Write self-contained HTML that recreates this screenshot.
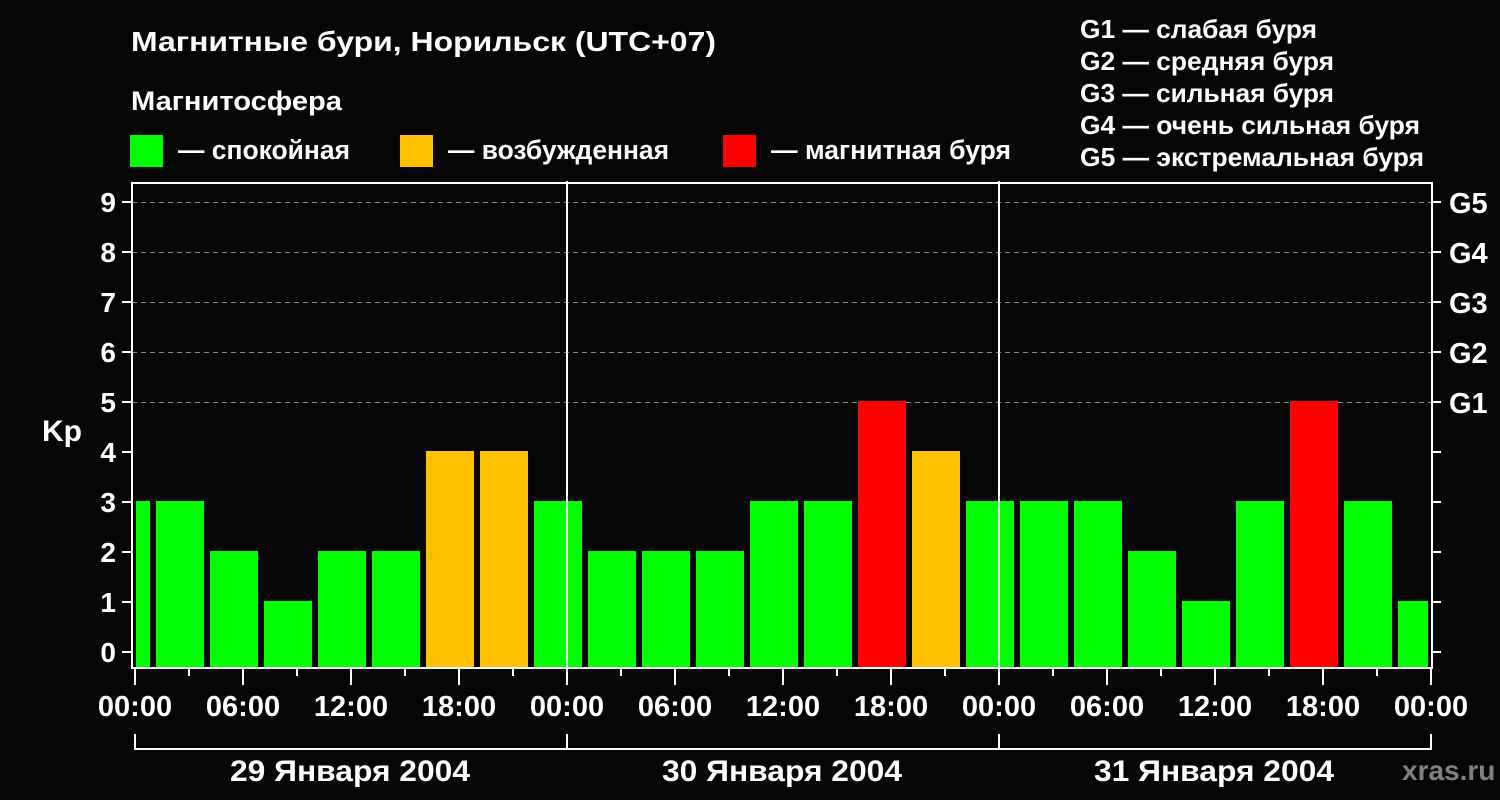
<!DOCTYPE html>
<html><head><meta charset="utf-8"><style>
html,body{margin:0;padding:0;background:#060606;width:1500px;height:800px;overflow:hidden}
svg{display:block}
text{font-family:"Liberation Sans",Arial,sans-serif;font-weight:bold;fill:#fff}
</style></head><body>
<svg width="1500" height="800" viewBox="0 0 1500 800" xmlns="http://www.w3.org/2000/svg">
<rect width="1500" height="800" fill="#060606"/>
<text x="131" y="51" font-size="28" textLength="585" lengthAdjust="spacingAndGlyphs">Магнитные бури, Норильск (UTC+07)</text>
<text x="131" y="110" font-size="27" textLength="211" lengthAdjust="spacingAndGlyphs">Магнитосфера</text>
<rect x="130" y="135" width="33" height="32" fill="#00ff00"/>
<text x="178" y="159" font-size="27" textLength="172" lengthAdjust="spacingAndGlyphs">— спокойная</text>
<rect x="400" y="135" width="33" height="32" fill="#ffc000"/>
<text x="448" y="159" font-size="27" textLength="221" lengthAdjust="spacingAndGlyphs">— возбужденная</text>
<rect x="723" y="135" width="33" height="32" fill="#ff0000"/>
<text x="771" y="159" font-size="27" textLength="240" lengthAdjust="spacingAndGlyphs">— магнитная буря</text>
<g font-size="26">
<text x="1080" y="38" textLength="237" lengthAdjust="spacingAndGlyphs">G1 — слабая буря</text>
<text x="1080" y="70" textLength="254" lengthAdjust="spacingAndGlyphs">G2 — средняя буря</text>
<text x="1080" y="102" textLength="254" lengthAdjust="spacingAndGlyphs">G3 — сильная буря</text>
<text x="1080" y="134" textLength="340" lengthAdjust="spacingAndGlyphs">G4 — очень сильная буря</text>
<text x="1080" y="166" textLength="344" lengthAdjust="spacingAndGlyphs">G5 — экстремальная буря</text>
</g>
<g stroke="#8a8a8a" stroke-width="1" stroke-dasharray="5,4">
<line x1="132" y1="202.5" x2="1432" y2="202.5"/>
<line x1="132" y1="252.5" x2="1432" y2="252.5"/>
<line x1="132" y1="302.5" x2="1432" y2="302.5"/>
<line x1="132" y1="352.5" x2="1432" y2="352.5"/>
<line x1="132" y1="402.5" x2="1432" y2="402.5"/>
</g>
<g>
<rect x="136" y="501" width="14" height="167" fill="#00ff00"/>
<rect x="156" y="501" width="48" height="167" fill="#00ff00"/>
<rect x="210" y="551" width="48" height="117" fill="#00ff00"/>
<rect x="264" y="601" width="48" height="67" fill="#00ff00"/>
<rect x="318" y="551" width="48" height="117" fill="#00ff00"/>
<rect x="372" y="551" width="48" height="117" fill="#00ff00"/>
<rect x="426" y="451" width="48" height="217" fill="#ffc000"/>
<rect x="480" y="451" width="48" height="217" fill="#ffc000"/>
<rect x="534" y="501" width="48" height="167" fill="#00ff00"/>
<rect x="588" y="551" width="48" height="117" fill="#00ff00"/>
<rect x="642" y="551" width="48" height="117" fill="#00ff00"/>
<rect x="696" y="551" width="48" height="117" fill="#00ff00"/>
<rect x="750" y="501" width="48" height="167" fill="#00ff00"/>
<rect x="804" y="501" width="48" height="167" fill="#00ff00"/>
<rect x="858" y="401" width="48" height="267" fill="#ff0000"/>
<rect x="912" y="451" width="48" height="217" fill="#ffc000"/>
<rect x="966" y="501" width="48" height="167" fill="#00ff00"/>
<rect x="1020" y="501" width="48" height="167" fill="#00ff00"/>
<rect x="1074" y="501" width="48" height="167" fill="#00ff00"/>
<rect x="1128" y="551" width="48" height="117" fill="#00ff00"/>
<rect x="1182" y="601" width="48" height="67" fill="#00ff00"/>
<rect x="1236" y="501" width="48" height="167" fill="#00ff00"/>
<rect x="1290" y="401" width="48" height="267" fill="#ff0000"/>
<rect x="1344" y="501" width="48" height="167" fill="#00ff00"/>
<rect x="1398" y="601" width="30" height="67" fill="#00ff00"/>
</g>
<g stroke="#fff" stroke-width="2" fill="none">
<rect x="132" y="183" width="1300" height="485"/>
<line x1="567" y1="181" x2="567" y2="668"/>
<line x1="999" y1="181" x2="999" y2="668"/>
</g>
<g stroke="#fff" stroke-width="2">
<path d="M122 202H132M122 252H132M122 302H132M122 352H132M122 402H132M122 452H132M122 502H132M122 552H132M122 602H132M122 652H132"/>
<path d="M1432 202H1441M1432 252H1441M1432 302H1441M1432 352H1441M1432 402H1441M1432 452H1441M1432 502H1441M1432 552H1441M1432 602H1441M1432 652H1441"/>
<path d="M135 668V685M243 668V685M351 668V685M459 668V685M567 668V685M675 668V685M783 668V685M891 668V685M999 668V685M1107 668V685M1215 668V685M1323 668V685M1431 668V685"/>
<path d="M189 668V676M297 668V676M405 668V676M513 668V676M621 668V676M729 668V676M837 668V676M945 668V676M1053 668V676M1161 668V676M1269 668V676M1377 668V676"/>
<path d="M135 734V749H1431V734M567 734V749M999 734V749" fill="none"/>
</g>
<g font-size="28" text-anchor="end">
<text x="116" y="212">9</text><text x="116" y="262">8</text><text x="116" y="312">7</text>
<text x="116" y="362">6</text><text x="116" y="412">5</text><text x="116" y="462">4</text>
<text x="116" y="512">3</text><text x="116" y="562">2</text><text x="116" y="612">1</text>
<text x="116" y="662">0</text>
</g>
<text x="42" y="441" font-size="30">Kp</text>
<g font-size="29">
<text x="1449" y="213">G5</text><text x="1449" y="263">G4</text><text x="1449" y="313">G3</text>
<text x="1449" y="363">G2</text><text x="1449" y="413">G1</text>
</g>
<g font-size="29" text-anchor="middle">
<text x="135" y="716">00:00</text><text x="243" y="716">06:00</text><text x="351" y="716">12:00</text>
<text x="459" y="716">18:00</text><text x="567" y="716">00:00</text><text x="675" y="716">06:00</text>
<text x="783" y="716">12:00</text><text x="891" y="716">18:00</text><text x="999" y="716">00:00</text>
<text x="1107" y="716">06:00</text><text x="1215" y="716">12:00</text><text x="1323" y="716">18:00</text>
<text x="1431" y="716">00:00</text>
</g>
<g font-size="30" text-anchor="middle">
<text x="350" y="781" textLength="240" lengthAdjust="spacingAndGlyphs">29 Января 2004</text>
<text x="782" y="781" textLength="240" lengthAdjust="spacingAndGlyphs">30 Января 2004</text>
<text x="1214" y="781" textLength="240" lengthAdjust="spacingAndGlyphs">31 Января 2004</text>
</g>
<text x="1402" y="780" font-size="28" style="fill:#808080">xras.ru</text>
</svg>
</body></html>
